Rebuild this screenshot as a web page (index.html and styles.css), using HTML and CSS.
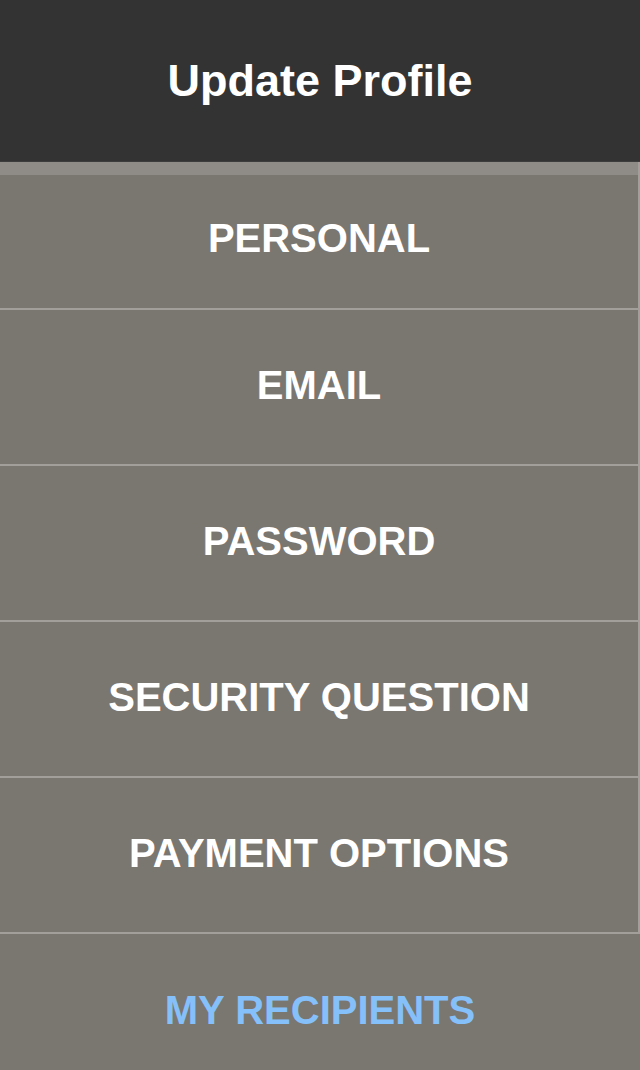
FILE: index.html
```html
<!DOCTYPE html>
<html>
<head>
<meta charset="utf-8">
<link rel="stylesheet" href="styles.css">
</head>
<body>
<div class="page">
  <header class="topbar"><h1 class="title">Update Profile</h1></header>
  <div class="strip"></div>
  <nav class="menu">
    <a class="item first">PERSONAL</a>
    <a class="item">EMAIL</a>
    <a class="item">PASSWORD</a>
    <a class="item">SECURITY QUESTION</a>
    <a class="item">PAYMENT OPTIONS</a>
    <a class="item last active">MY RECIPIENTS</a>
  </nav>
</div>
</body>
</html>
```
FILE: styles.css
```css
html, body {
  margin: 0;
  padding: 0;
  background: #7a7670;
}
body {
  font-family: "Liberation Sans", Arial, sans-serif;
  width: 640px;
  height: 1070px;
  overflow: hidden;
}
.page {
  display: flex;
  flex-direction: column;
}
.topbar {
  height: 161px;
  background: #333333;
  border-bottom: 1px solid #3d3d3d;
  display: flex;
  align-items: center;
  justify-content: center;
}
.title {
  margin: 0;
  color: #ffffff;
  font-size: 45px;
  font-weight: bold;
  letter-spacing: 0;
}
.strip {
  height: 13px;
  background: #8f8b87;
  border-right: 2px solid #a29e99;
}
.menu {
  display: flex;
  flex-direction: column;
}
.item {
  box-sizing: border-box;
  height: 156px;
  padding-bottom: 4px;
  display: flex;
  align-items: center;
  justify-content: center;
  color: #ffffff;
  font-size: 40px;
  font-weight: bold;
  background: #7a7670;
  border-bottom: 2px solid #a29e99;
  border-right: 2px solid #a29e99;
  text-decoration: none;
}
.item.first {
  height: 135px;
  padding-bottom: 7px;
}
.item.last {
  border-bottom: none;
  border-right: none;
}
.item.active {
  color: #85c0fa;
}
```
